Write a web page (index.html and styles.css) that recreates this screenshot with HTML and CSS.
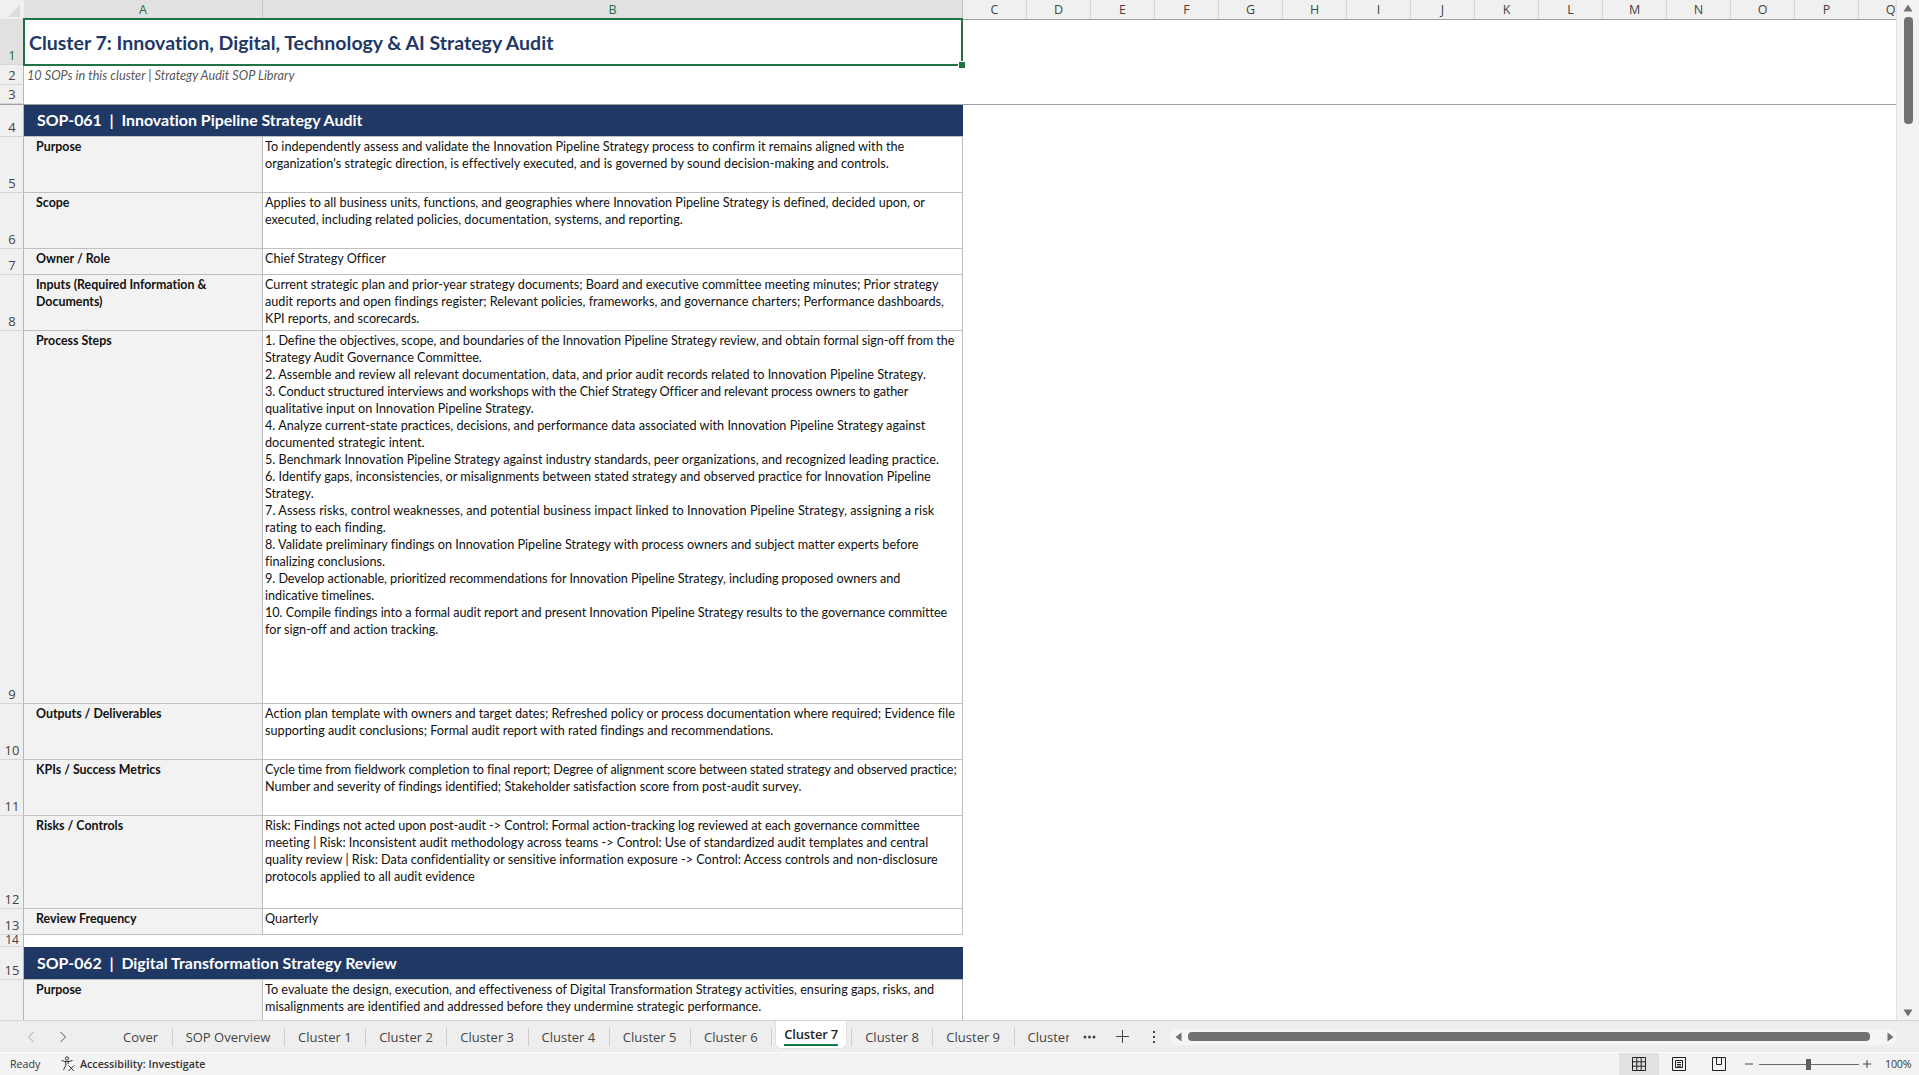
FILE: index.html
```html
<!DOCTYPE html>
<html lang="en">
<head>
  <meta charset="UTF-8" />
  <title>Cluster 7 - Strategy Audit SOP Library</title>
  <link rel="stylesheet" href="styles.css">
</head>
<body>

  <div class="sheet">
    <div class="grid">

      <div class="col-heads">
        <div class="corner"><svg width="14" height="14" viewBox="0 0 14 14"><path d="M13 1V13H1Z" fill="#dcdcdc"/></svg></div>
        <div class="col col-a selected">A</div>
        <div class="col col-b selected">B</div>
        <div class="col">C</div><div class="col">D</div><div class="col">E</div><div class="col">F</div>
        <div class="col">G</div><div class="col">H</div><div class="col">I</div><div class="col">J</div>
        <div class="col">K</div><div class="col">L</div><div class="col">M</div><div class="col">N</div>
        <div class="col">O</div><div class="col">P</div><div class="col">Q</div>
      </div>

      <div class="row row-title">
        <div class="num num-selected">1</div>
        <div class="title-cell">
          Cluster 7: Innovation, Digital, Technology &amp; AI Strategy Audit
          <span class="fill-handle"></span>
        </div>
      </div>
      <div class="row row-sub">
        <div class="num">2</div>
        <div class="sub-cell">10 SOPs in this cluster | Strategy Audit SOP Library</div>
      </div>
      <div class="row row-gap">
        <div class="num">3</div>
      </div>

      <div class="row row-band-first">
        <div class="num">4</div>
        <div class="band">SOP-061 &nbsp;|&nbsp; Innovation Pipeline Strategy Audit</div>
      </div>
      <div class="row h56">
        <div class="num">5</div>
        <div class="label">Purpose</div>
        <div class="text">To independently assess and validate the Innovation Pipeline Strategy process to confirm it remains aligned with the<br>organization's strategic direction, is effectively executed, and is governed by sound decision-making and controls.</div>
      </div>
      <div class="row h56">
        <div class="num">6</div>
        <div class="label">Scope</div>
        <div class="text">Applies to all business units, functions, and geographies where Innovation Pipeline Strategy is defined, decided upon, or<br>executed, including related policies, documentation, systems, and reporting.</div>
      </div>
      <div class="row h26">
        <div class="num">7</div>
        <div class="label">Owner / Role</div>
        <div class="text">Chief Strategy Officer</div>
      </div>
      <div class="row h56">
        <div class="num">8</div>
        <div class="label">Inputs (Required Information &amp;<br>Documents)</div>
        <div class="text">Current strategic plan and prior-year strategy documents; Board and executive committee meeting minutes; Prior strategy<br>audit reports and open findings register; Relevant policies, frameworks, and governance charters; Performance dashboards,<br>KPI reports, and scorecards.</div>
      </div>
      <div class="row h373">
        <div class="num">9</div>
        <div class="label">Process Steps</div>
        <div class="text"><span class="tight">1. Define the objectives, scope, and boundaries of the Innovation Pipeline Strategy review, and obtain formal sign-off from the</span><br>Strategy Audit Governance Committee.<br>2. Assemble and review all relevant documentation, data, and prior audit records related to Innovation Pipeline Strategy.<br><span class="tighter">3. Conduct structured interviews and workshops with the Chief Strategy Officer and relevant process owners to gather</span><br>qualitative input on Innovation Pipeline Strategy.<br>4. Analyze current-state practices, decisions, and performance data associated with Innovation Pipeline Strategy against<br>documented strategic intent.<br>5. Benchmark Innovation Pipeline Strategy against industry standards, peer organizations, and recognized leading practice.<br>6. Identify gaps, inconsistencies, or misalignments between stated strategy and observed practice for Innovation Pipeline<br>Strategy.<br><span class="loose">7. Assess risks, control weaknesses, and potential business impact linked to Innovation Pipeline Strategy, assigning a risk</span><br>rating to each finding.<br>8. Validate preliminary findings on Innovation Pipeline Strategy with process owners and subject matter experts before<br>finalizing conclusions.<br><span class="tight">9. Develop actionable, prioritized recommendations for Innovation Pipeline Strategy, including proposed owners and</span><br>indicative timelines.<br><span class="tight">10. Compile findings into a formal audit report and present Innovation Pipeline Strategy results to the governance committee</span><br>for sign-off and action tracking.</div>
      </div>
      <div class="row h56">
        <div class="num">10</div>
        <div class="label">Outputs / Deliverables</div>
        <div class="text">Action plan template with owners and target dates; Refreshed policy or process documentation where required; Evidence file<br>supporting audit conclusions; Formal audit report with rated findings and recommendations.</div>
      </div>
      <div class="row h56">
        <div class="num">11</div>
        <div class="label">KPIs / Success Metrics</div>
        <div class="text"><span class="tighter">Cycle time from fieldwork completion to final report; Degree of alignment score between stated strategy and observed practice;</span><br>Number and severity of findings identified; Stakeholder satisfaction score from post-audit survey.</div>
      </div>
      <div class="row h93">
        <div class="num">12</div>
        <div class="label">Risks / Controls</div>
        <div class="text"><span class="tight">Risk: Findings not acted upon post-audit -&gt; Control: Formal action-tracking log reviewed at each governance committee</span><br>meeting | Risk: Inconsistent audit methodology across teams -&gt; Control: Use of standardized audit templates and central<br>quality review | Risk: Data confidentiality or sensitive information exposure -&gt; Control: Access controls and non-disclosure<br>protocols applied to all audit evidence</div>
      </div>
      <div class="row h26">
        <div class="num">13</div>
        <div class="label">Review Frequency</div>
        <div class="text">Quarterly</div>
      </div>
      <div class="row row-spacer">
        <div class="num">14</div>
      </div>
      <div class="row row-band">
        <div class="num">15</div>
        <div class="band">SOP-062 &nbsp;|&nbsp; Digital Transformation Strategy Review</div>
      </div>
      <div class="row h56">
        <div class="num">16</div>
        <div class="label">Purpose</div>
        <div class="text">To evaluate the design, execution, and effectiveness of Digital Transformation Strategy activities, ensuring gaps, risks, and<br>misalignments are identified and addressed before they undermine strategic performance.</div>
      </div>

    </div>

    <div class="vscroll">
      <svg class="arrow" width="10" height="8" viewBox="0 0 10 8"><path d="M5 0.5L9.5 7.5H0.5Z" fill="#717171"/></svg>
      <div class="vthumb"></div>
      <svg class="arrow arrow-down" width="10" height="8" viewBox="0 0 10 8"><path d="M0.5 0.5H9.5L5 7.5Z" fill="#717171"/></svg>
    </div>
  </div>

  <div class="tabbar">
    <div class="tab-nav">
      <svg width="8" height="12" viewBox="0 0 8 12"><path d="M6.5 1L1.5 6L6.5 11" fill="none" stroke="#a6a6a6" stroke-width="1"/></svg>
      <svg width="8" height="12" viewBox="0 0 8 12"><path d="M1.5 1L6.5 6L1.5 11" fill="none" stroke="#555" stroke-width="1"/></svg>
    </div>
    <div class="tabs">
      <div class="tab">Cover</div>
      <div class="tab">SOP Overview</div>
      <div class="tab">Cluster 1</div>
      <div class="tab">Cluster 2</div>
      <div class="tab">Cluster 3</div>
      <div class="tab">Cluster 4</div>
      <div class="tab">Cluster 5</div>
      <div class="tab">Cluster 6</div>
      <div class="tab-active"><span>Cluster 7</span></div>
      <i class="tab-sep"></i>
      <div class="tab">Cluster 8</div>
      <div class="tab">Cluster 9</div>
      <div class="tab tab-clipped">Cluster 10</div>
    </div>
    <div class="tab-tools">
      <svg width="13" height="4" viewBox="0 0 13 4"><circle cx="2" cy="2" r="1.5" fill="#444"/><circle cx="6.5" cy="2" r="1.5" fill="#444"/><circle cx="11" cy="2" r="1.5" fill="#444"/></svg>
      <svg width="13" height="13" viewBox="0 0 13 13"><path d="M6.5 0V13M0 6.5H13" stroke="#444" stroke-width="1"/></svg>
      <svg class="kebab" width="4" height="12" viewBox="0 0 4 12"><rect x="1" y="0" width="2" height="2" fill="#444"/><rect x="1" y="5" width="2" height="2" fill="#444"/><rect x="1" y="10" width="2" height="2" fill="#444"/></svg>
    </div>
    <div class="hscroll">
      <svg width="7" height="10" viewBox="0 0 7 10"><path d="M6.5 0.5V9.5L0.5 5Z" fill="#717171"/></svg>
      <div class="hthumb"></div>
      <svg width="7" height="10" viewBox="0 0 7 10"><path d="M0.5 0.5V9.5L6.5 5Z" fill="#717171"/></svg>
    </div>
  </div>

  <div class="statusbar">
    <span class="ready">Ready</span>
    <svg class="a11y" width="16" height="16" viewBox="0 0 16 16" fill="none" stroke="#333" stroke-width="1">
      <circle cx="7" cy="2.5" r="1.6"/>
      <path d="M1.5 4.5L5 5.5H9L12.5 4.5M5.5 5.5L6 9L3.5 14M8.5 5.5L8 8"/>
      <path d="M8.5 9.5L14 15M14 9.5L8.5 15"/>
    </svg>
    <span class="a11y-text">Accessibility: Investigate</span>
    <div class="views">
      <div class="view view-on">
        <svg width="14" height="14" viewBox="0 0 14 14" fill="none" stroke="#222"><path d="M0.5 0.5H13.5V13.5H0.5ZM0.5 4.8H13.5M0.5 9.2H13.5M4.8 0.5V13.5M9.2 0.5V13.5"/></svg>
      </div>
      <div class="view">
        <svg width="14" height="14" viewBox="0 0 14 14" fill="none" stroke="#222"><path d="M0.5 0.5H13.5V13.5H0.5ZM3.5 3.5H10.5V10.5H3.5ZM5 5.5H9M5 7.5H9M5 9.2H9"/></svg>
      </div>
      <div class="view">
        <svg width="14" height="14" viewBox="0 0 14 14" fill="none" stroke="#222"><path d="M0.5 0.5H13.5V13.5H0.5ZM4.5 0.5V7.5H9.5V0.5"/></svg>
      </div>
    </div>
    <div class="zoom">
      <svg width="8" height="8" viewBox="0 0 8 8"><path d="M0 4H8" stroke="#444"/></svg>
      <div class="slider"><span class="slider-thumb"></span></div>
      <svg width="8" height="8" viewBox="0 0 8 8"><path d="M0 4H8M4 0V8" stroke="#444"/></svg>
      <span class="zoom-pct">100%</span>
    </div>
  </div>

</body>
</html>
```

FILE: styles.css
```css
* {
  box-sizing: border-box;
  margin: 0;
  padding: 0;
}

body {
  font-family: 'Lato', 'Liberation Sans', sans-serif;
  font-variant-ligatures: none;
  background: #f3f3f3;
  height: 100vh;
  overflow: hidden;
  display: flex;
  flex-direction: column;
  color: #111;
}

/* sheet area */

.sheet {
  height: 1021px;
  display: flex;
  border-bottom: 1px solid #d4d4d4;
}

.grid {
  width: 1897px;
  height: 1020px;
  overflow: hidden;
  background: #fff;
  border-right: 1px solid #e4e4e4;
}

.col-heads {
  display: flex;
  height: 20px;
  margin-bottom: -1px;
  background: #f0f0f0;
  border-bottom: 1px solid #a0a0a0;
  overflow: hidden;
}

.corner {
  width: 24px;
  flex: none;
  display: flex;
  justify-content: flex-end;
  align-items: flex-end;
  padding: 0 3px 1px 0;
}

.col {
  width: 64px;
  flex: none;
  font-family: 'Open Sans', sans-serif;
  font-size: 12.5px;
  line-height: 20px;
  text-align: center;
  color: #444;
  border-right: 1px solid #d6d6d6;
}

.col-a { width: 239px; }
.col-b { width: 700px; }

.col.selected {
  background: #e1e1e1;
  color: #1e7145;
  border-right-color: #c6c6c6;
}

.row {
  display: flex;
  height: 56px;
}

.num {
  width: 24px;
  flex: none;
  display: flex;
  justify-content: center;
  align-items: flex-end;
  padding-left: 1px;
  font-family: 'Open Sans', sans-serif;
  font-size: 13px;
  line-height: 17px;
  color: #444;
  background: #f0f0f0;
  border-right: 1px solid #b5b5b5;
  border-bottom: 1px solid #d6d6d6;
}

.num-selected {
  background: #e1e1e1;
  color: #1e7145;
}

.row-title { height: 46px; }
.row-sub { height: 20px; }
.row-gap { height: 20px; border-bottom: 1px solid #a0a0a0; }
.row-band-first { height: 32px; }
.row-band { height: 33px; }
.row-spacer { height: 12px; }
.row-spacer .num { line-height: 12px; font-size: 12px; }
.h26 { height: 26px; }
.h56 { height: 56px; }
.h93 { height: 93px; }
.h373 { height: 373px; }

.title-cell {
  position: relative;
  width: 940px;
  margin: -1px 0 -1px -1px;
  padding-left: 4px;
  display: flex;
  align-items: center;
  border: 2px solid #217346;
  background: #fff;
  font-size: 19.5px;
  font-weight: 700;
  color: #1f3864;
}

.fill-handle {
  position: absolute;
  right: -4px;
  bottom: -4px;
  width: 6px;
  height: 6px;
  background: #217346;
  border: 1px solid #fff;
  box-sizing: content-box;
  margin: -1px;
}

.sub-cell {
  padding-left: 3px;
  font-size: 12.7px;
  font-style: italic;
  line-height: 21px;
  color: #595959;
}

.band {
  width: 939px;
  padding-left: 13px;
  background: #1f3864;
  color: #fff;
  font-size: 15.9px;
  font-weight: 700;
  line-height: 30px;
  border-bottom: 1px solid #bfbfbf;
}

.row-band .band { line-height: 32px; }

.label {
  width: 239px;
  flex: none;
  padding: 1px 4px 0 12px;
  background: #f2f2f2;
  font-size: 12.4px;
  font-weight: 700;
  line-height: 17px;
  border-right: 1px solid #bfbfbf;
  border-bottom: 1px solid #bfbfbf;
}

.text {
  width: 700px;
  flex: none;
  padding: 1px 0 0 2px;
  font-size: 12.66px;
  line-height: 17px;
  white-space: nowrap;
  overflow: hidden;
  border-right: 1px solid #bfbfbf;
  border-bottom: 1px solid #bfbfbf;
}

/* lines that ran long or short against the sheet's own wrapping */
.tight { letter-spacing: -0.06px; }
.tighter { letter-spacing: -0.12px; }
.loose { letter-spacing: 0.06px; }

/* vertical scrollbar */

.vscroll {
  width: 22px;
  flex: none;
  display: flex;
  flex-direction: column;
  align-items: center;
  padding-top: 4px;
  background: #f3f3f3;
}

.vthumb {
  width: 9px;
  height: 107px;
  margin-top: 5px;
  border-radius: 4px;
  background: #717171;
}

.arrow-down {
  margin-top: auto;
  margin-bottom: 3px;
}

/* sheet tabs */

.tabbar {
  height: 32px;
  display: flex;
  align-items: center;
  background: #eeeeee;
  border-bottom: 1px solid #fbfbfb;
  font-family: 'Open Sans', sans-serif;
}

.tab-nav {
  width: 110px;
  flex: none;
  display: flex;
  gap: 24px;
  padding-left: 27px;
}

.tabs {
  width: 959px;
  flex: none;
  display: flex;
  align-items: center;
  overflow: hidden;
  height: 32px;
}

.tab {
  flex: none;
  height: 18px;
  padding: 0 13.5px 0 13px;
  font-size: 13px;
  line-height: 18px;
  color: #444;
  border-right: 1px solid #cfcfcf;
  white-space: nowrap;
}

.tab-active {
  flex: none;
  align-self: flex-start;
  width: 72px;
  height: 28px;
  margin: 0 4px 0 3px;
  text-align: center;
  color: #1f1f1f;
  font-size: 13px;
  font-weight: 600;
  background: #fff;
  border: 1px solid #e2e2e2;
  border-top: none;
  border-radius: 0 0 6px 6px;
}

.tab-active span {
  display: inline-block;
  height: 25px;
  line-height: 27px;
  letter-spacing: -0.2px;
  border-bottom: 2px solid #107c41;
}

.tab-sep {
  flex: none;
  width: 1px;
  height: 18px;
  background: #cfcfcf;
}

.tab-clipped {
  border-right: none;
}

.tab-tools {
  width: 101px;
  flex: none;
  display: flex;
  align-items: center;
  gap: 20px;
  padding-left: 14px;
}

.kebab { margin-left: 3px; }

.hscroll {
  width: 727px;
  height: 16px;
  flex: none;
  display: flex;
  align-items: center;
  gap: 6px;
  padding: 0 3px 0 5px;
  border-radius: 8px;
  background: #f5f5f5;
}

.hthumb {
  flex: 1;
  height: 9px;
  margin-right: 11px;
  border-radius: 4px;
  background: #717171;
}

/* status bar */

.statusbar {
  flex: 1;
  display: flex;
  align-items: center;
  background: #f3f3f3;
  font-family: 'Open Sans', sans-serif;
  font-size: 10.7px;
  color: #333;
}

.ready {
  width: 60px;
  padding-left: 10px;
  flex: none;
}

.a11y { flex: none; }

.a11y-text {
  margin-left: 4px;
  font-weight: 600;
}

.views {
  margin-left: auto;
  display: flex;
  align-self: stretch;
}

.view {
  width: 40px;
  display: flex;
  justify-content: center;
  align-items: center;
}

.view-on { background: #e1e1e1; }

.zoom {
  width: 180px;
  flex: none;
  display: flex;
  align-items: center;
  padding-left: 6px;
}

.slider {
  position: relative;
  width: 100px;
  height: 1px;
  margin: 0 4px 0 6px;
  background: #6b6b6b;
}

.slider-thumb {
  position: absolute;
  left: 47px;
  top: -5px;
  width: 5px;
  height: 11px;
  background: #5f5f5f;
}

.zoom-pct {
  margin-left: 14px;
  letter-spacing: -0.2px;
}
```
